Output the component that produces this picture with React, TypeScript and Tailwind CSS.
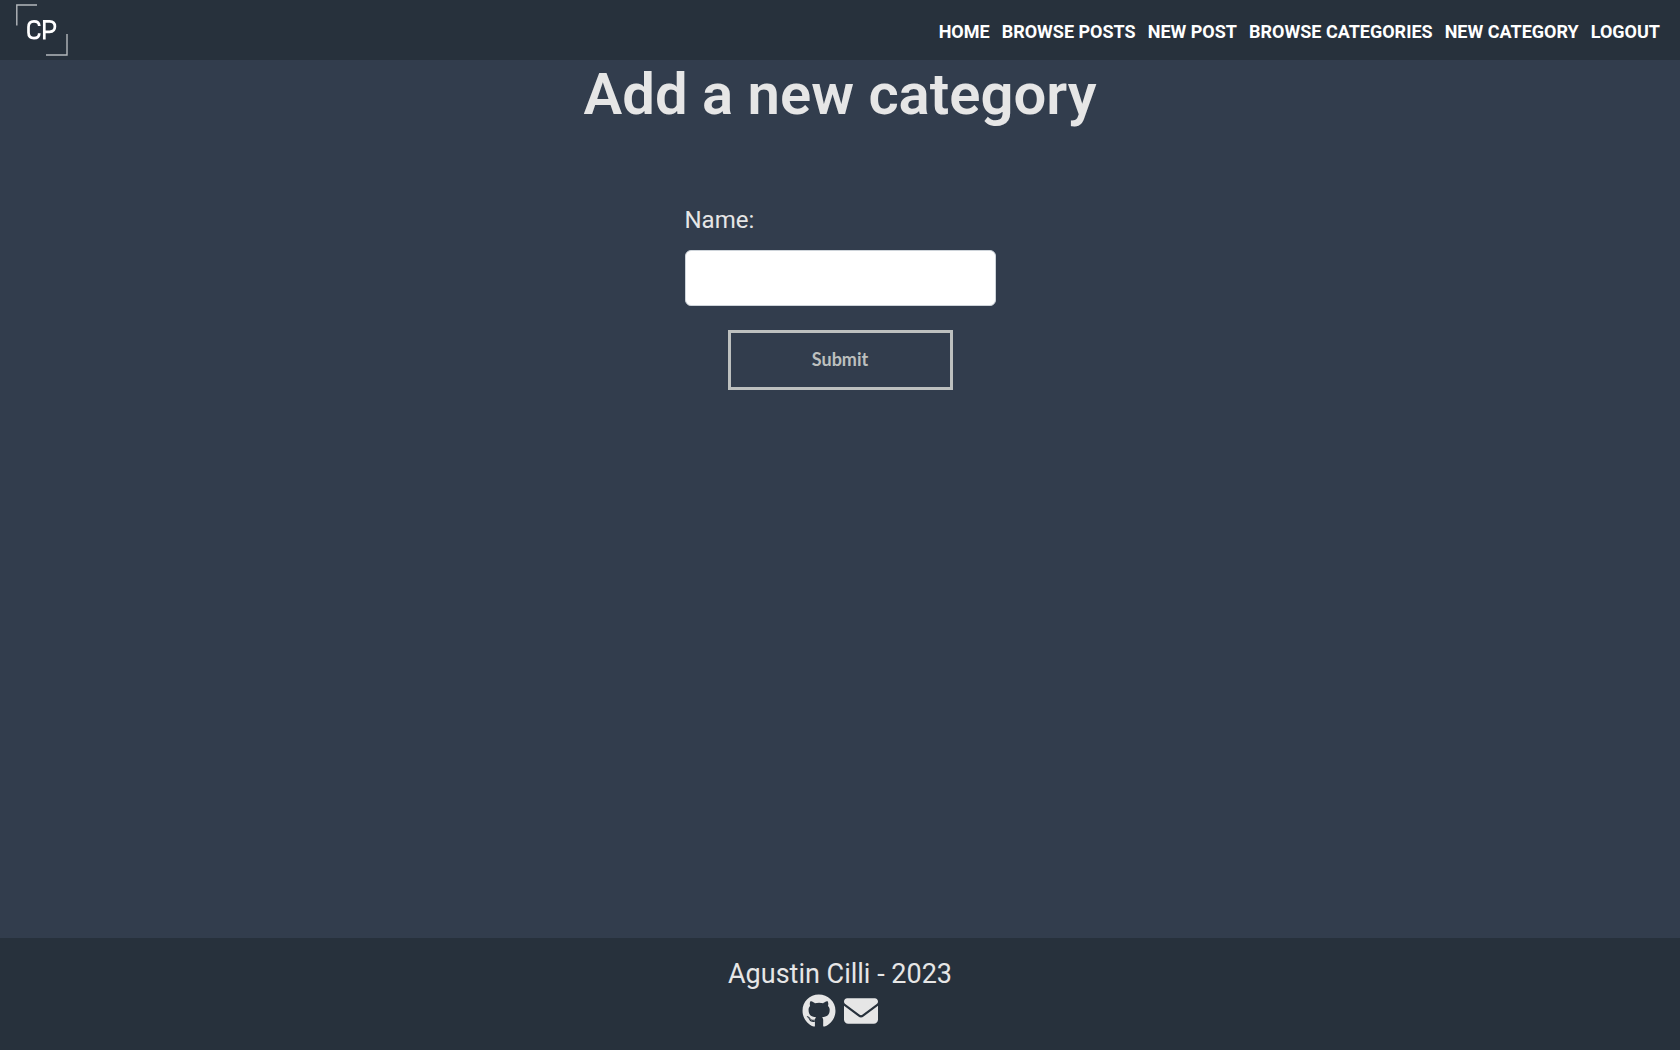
import { FaGithub, FaEnvelope } from "react-icons/fa6";

const links = [
  "Home",
  "Browse posts",
  "New post",
  "Browse categories",
  "New category",
  "Logout",
];

function Logo() {
  return (
    <a href="#" aria-label="CP" className="block">
      <svg
        width="52"
        height="52"
        viewBox="0 0 52 52"
        fill="none"
        className="block"
      >
        <g stroke="#b4b8bc" strokeWidth="1.4">
          <path d="M21 1H0.8V21.5" />
          <path d="M51 30V51H30" />
        </g>
        <g stroke="#ffffff" strokeWidth="2.7">
          <path d="M23.2 22.1V21.6C23.2 19 21.2 17.3 18 17.3C14.5 17.3 12.5 19.6 12.5 23V28.6C12.5 32 14.5 34.2 18 34.2C21.2 34.2 23.2 32.4 23.2 29.8V29.2" />
          <path d="M28.3 35.4V17.4H33.6C36.9 17.4 38.9 19.5 38.9 22.6C38.9 25.8 36.9 27.8 33.6 27.8H28.3" />
        </g>
      </svg>
    </a>
  );
}

export default function App() {
  return (
    <div className="flex min-h-screen flex-col bg-[#323d4d] font-[Roboto,sans-serif] text-[#e6e6e6]">
      <header className="flex h-15 items-center justify-between bg-[#27313c] pr-5 pl-4">
        <Logo />
        <nav className="flex gap-3 pt-1 font-[Roboto,sans-serif] text-[18px] leading-6 font-bold text-white uppercase">
          {links.map((link) => (
            <a key={link} href="#">
              {link}
            </a>
          ))}
        </nav>
      </header>

      <main className="flex flex-1 flex-col items-center">
        <h1 className="text-[58px] leading-[68px] font-semibold">
          Add a new category
        </h1>
        <form
          className="mt-[74px] flex flex-col items-center"
          onSubmit={(event) => event.preventDefault()}
        >
          <div className="flex flex-col gap-3">
            <label htmlFor="name" className="text-2xl leading-9">
              Name:
            </label>
            <input
              id="name"
              type="text"
              className="h-14 w-[311px] rounded-md border border-[#ced4da] bg-white px-3 text-2xl text-[#212529]"
            />
          </div>
          <button
            type="submit"
            className="mt-6 h-15 w-[225px] border-3 border-[#bdc0bf] pb-0.5 font-[Lato,sans-serif] text-lg font-bold text-[#bdc0bf]"
          >
            Submit
          </button>
        </form>
      </main>

      <footer className="flex h-28 flex-col items-center bg-[#27313c] pt-4">
        <p className="text-[27px] leading-10">Agustin Cilli - 2023</p>
        <div className="flex items-center gap-2">
          <a href="#" aria-label="GitHub">
            <FaGithub size={34} />
          </a>
          <a href="#" aria-label="Email">
            <FaEnvelope size={34} />
          </a>
        </div>
      </footer>
    </div>
  );
}
